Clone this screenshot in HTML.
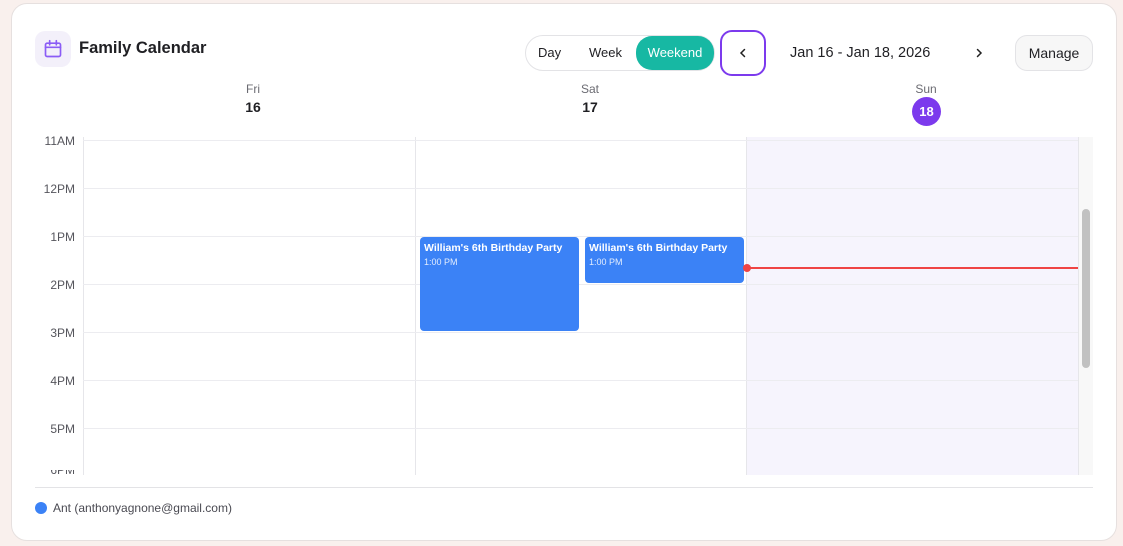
<!DOCTYPE html>
<html><head><style>
*{box-sizing:border-box;margin:0;padding:0}
body{width:1123px;height:546px;background:#f9f0ed;font-family:"Liberation Sans",sans-serif;position:relative;overflow:hidden;color:#1f1f23}
.card{position:absolute;left:11px;top:3px;width:1106px;height:538px;background:#fff;border:1px solid #e6e0df;border-radius:16px}
.a{position:absolute}
.hl{position:absolute;left:83px;width:995px;height:1px;background:#ececf0}
.lbl{position:absolute;right:1048px;font-size:12px;color:#55555c;transform:translateY(-50%)}
.ev{position:absolute;background:#3b82f6;border-radius:4px;color:#fff;padding:5px 4px}
.ev b{font-size:10.5px;display:block;white-space:nowrap}
.ev span{font-size:9px;opacity:.85;display:block;margin-top:3px}
</style></head><body>
<div class="card"></div>
<div class="a" style="left:35px;top:31px;width:36px;height:36px;border-radius:10px;background:#f3f0fa"></div>
<svg class="a" style="left:43px;top:39px" width="20" height="20" viewBox="0 0 24 24" fill="none" stroke="#8b5cf6" stroke-width="2" stroke-linecap="round"><rect x="3" y="5" width="18" height="16" rx="2"/><path d="M8 2v5M16 2v5M3 10h18"/></svg>
<div class="a" style="left:79px;top:39px;font-size:16.5px;font-weight:bold">Family Calendar</div>
<div class="a" style="left:525px;top:35px;width:190px;height:36px;border:1px solid #e3e3e6;border-radius:18px"></div>
<div class="a" style="left:538px;top:45px;font-size:13px">Day</div>
<div class="a" style="left:589px;top:45px;font-size:13px">Week</div>
<div class="a" style="left:636px;top:36px;width:78px;height:34px;border-radius:16px;background:#17b8a3;color:#fff;font-size:13px;text-align:center;line-height:34px">Weekend</div>
<div class="a" style="left:720px;top:30px;width:46px;height:46px;border:2px solid #7c3aed;border-radius:12px"></div>
<svg class="a" style="left:737px;top:47px" width="12" height="12" viewBox="0 0 12 12" fill="none" stroke="#222" stroke-width="1.5" stroke-linecap="round"><path d="M7.5 2.5 4 6l3.5 3.5"/></svg>
<div class="a" style="left:790px;top:45px;font-size:14.5px">Jan 16 - Jan 18, 2026</div>
<svg class="a" style="left:973px;top:47px" width="12" height="12" viewBox="0 0 12 12" fill="none" stroke="#222" stroke-width="1.5" stroke-linecap="round"><path d="M4.5 2.5 8 6l-3.5 3.5"/></svg>
<div class="a" style="left:1015px;top:35px;width:78px;height:36px;border:1px solid #e3e3e6;border-radius:12px;background:#f7f7f7;font-size:14px;text-align:center;line-height:34px">Manage</div>
<div class="a" style="left:213px;top:82px;width:80px;text-align:center;font-size:12px;color:#6b6b72">Fri</div>
<div class="a" style="left:213px;top:99px;width:80px;text-align:center;font-size:14px;font-weight:bold">16</div>
<div class="a" style="left:550px;top:82px;width:80px;text-align:center;font-size:12px;color:#6b6b72">Sat</div>
<div class="a" style="left:550px;top:99px;width:80px;text-align:center;font-size:14px;font-weight:bold">17</div>
<div class="a" style="left:886px;top:82px;width:80px;text-align:center;font-size:12px;color:#6b6b72">Sun</div>
<div class="a" style="left:912px;top:97px;width:29px;height:29px;border-radius:50%;background:#7c3aed;color:#fff;font-size:13px;font-weight:bold;text-align:center;line-height:29px">18</div>
<div class="a" style="left:746px;top:137px;width:332px;height:338px;background:#f6f4fd"></div>
<div class="a" style="left:83px;top:137px;width:1px;height:338px;background:#e6e6ea"></div>
<div class="a" style="left:415px;top:137px;width:1px;height:338px;background:#e6e6ea"></div>
<div class="a" style="left:746px;top:137px;width:1px;height:338px;background:#e6e6ea"></div>
<div class="a" style="left:1078px;top:137px;width:15px;height:338px;background:#f8f8f8;border-left:1px solid #e6e6ea"></div>
<div class="a" style="left:1082px;top:209px;width:8px;height:159px;border-radius:4px;background:#c1c1c1"></div>
<div class="hl" style="top:140px"></div><div class="hl" style="top:188px"></div><div class="hl" style="top:236px"></div><div class="hl" style="top:284px"></div><div class="hl" style="top:332px"></div><div class="hl" style="top:380px"></div><div class="hl" style="top:428px"></div>
<div class="lbl" style="top:141px">11AM</div><div class="lbl" style="top:189px">12PM</div><div class="lbl" style="top:237px">1PM</div><div class="lbl" style="top:285px">2PM</div><div class="lbl" style="top:333px">3PM</div><div class="lbl" style="top:381px">4PM</div><div class="lbl" style="top:429px">5PM</div>
<div class="a" style="left:35px;top:470px;width:40px;height:5px;overflow:hidden"><div style="position:absolute;right:0;top:-7px;font-size:12px;color:#55555c">6PM</div></div>
<div class="ev" style="left:420px;top:237px;width:159px;height:94px"><b>William's 6th Birthday Party</b><span>1:00 PM</span></div>
<div class="ev" style="left:585px;top:237px;width:159px;height:46px"><b>William's 6th Birthday Party</b><span>1:00 PM</span></div>
<div class="a" style="left:747px;top:267px;width:331px;height:2px;background:#ef4444"></div>
<div class="a" style="left:743px;top:264px;width:8px;height:8px;border-radius:50%;background:#ef4444"></div>
<div class="a" style="left:35px;top:487px;width:1058px;height:1px;background:#e3e3e6"></div>
<div class="a" style="left:35px;top:502px;width:12px;height:12px;border-radius:50%;background:#3b82f6"></div>
<div class="a" style="left:53px;top:501px;font-size:12px;color:#4a4a52">Ant (anthonyagnone@gmail.com)</div>
</body></html>
